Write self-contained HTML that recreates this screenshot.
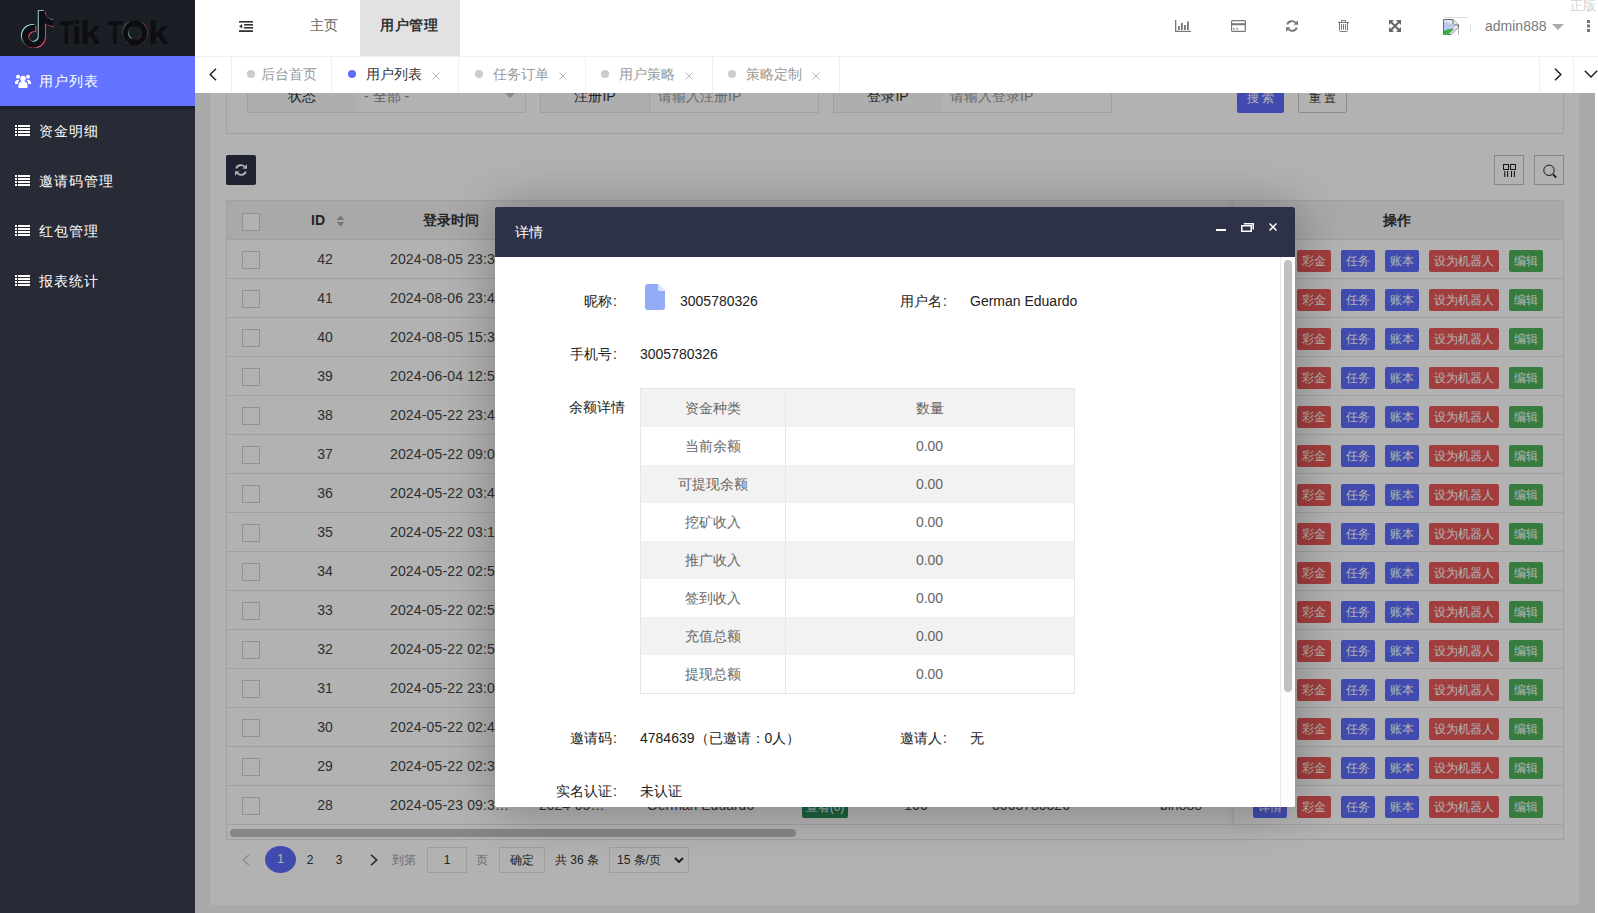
<!DOCTYPE html>
<html><head><meta charset="utf-8">
<style>
*{box-sizing:border-box;margin:0;padding:0}
html,body{width:1598px;height:913px;overflow:hidden;background:#fff;font-family:"Liberation Sans",sans-serif;font-size:14px;color:#333}
.a{position:absolute}
#side{left:0;top:0;width:195px;height:913px;background:#282a36}
#logo{left:0;top:0;width:195px;height:56px;background:#1c1e26}
.mi{position:absolute;left:0;width:195px;height:50px;color:#fff;font-size:14px;line-height:50px;letter-spacing:1px}
.mi span{position:absolute;left:39px;top:0}
.mi svg{position:absolute;left:15px}
#hdr{left:195px;top:0;width:1403px;height:56px;background:#fff}
#tabs{left:195px;top:56px;width:1403px;height:37px;background:#fff;border-top:1px solid #f0f0f0}
.tb{position:absolute;top:0;height:36px;border-right:1px solid #f0f0f0;color:#999;line-height:34px;font-size:14px}
.tb i{position:absolute;width:8px;height:8px;border-radius:50%;background:#ccc;top:13px}
.tb b{position:absolute;font-weight:normal}
.tb em{position:absolute;font-style:normal;top:0}
#cont{left:195px;top:93px;width:1400px;height:820px;background:#f2f2f2;overflow:hidden}
#shade{left:195px;top:93px;width:1400px;height:820px;background:rgba(0,0,0,.3)}
#modal{left:495px;top:207px;width:800px;height:600px;background:#fff;box-shadow:1px 1px 50px rgba(0,0,0,.3);border-radius:2px;overflow:hidden}
#mtitle{left:0;top:0;width:800px;height:50px;background:#2e3248;color:#fff;font-size:14px;line-height:50px;padding-left:20px}
.hi{position:absolute;top:20px}
.lg{top:12px;font-size:34px;font-weight:bold;color:#0d0e12;line-height:40px;transform-origin:0 0}
.ml{position:absolute;left:0;width:122px;text-align:right;line-height:20px;color:#222;font-size:14px}
.mv{position:absolute;line-height:20px;color:#222;font-size:14px;white-space:nowrap}
.mr{position:absolute;left:0;width:435px;height:38px}
.mr span{position:absolute;top:0;text-align:center;line-height:38px;color:#666;font-size:14px}

.lab{position:absolute;top:-18px;width:110px;height:38px;border:1px solid #e6e6e6;background:#fafafa;text-align:center;line-height:40px;color:#333;font-size:14px}
.inp{position:absolute;top:-18px;height:38px;border:1px solid #e6e6e6;border-left:none;background:#fff;line-height:40px;color:#999;padding-left:8px;font-size:14px}
#tbl{left:31px;top:107px;width:1338px;height:640px;border:1px solid #e6e6e6;background:#fff;overflow:hidden}
.th{position:absolute;left:0;top:0;width:1338px;height:39px;background:#f2f2f2;border-bottom:1px solid #e6e6e6;line-height:38px}
.tr{position:absolute;left:0;width:1338px;height:39px;border-bottom:1px solid #e6e6e6;line-height:38px}
.fr{position:absolute;left:0;width:332px;height:39px;border-bottom:1px solid #e6e6e6;background:#fff}
.cb{position:absolute;left:15px;width:18px;height:18px;border:1px solid #d2d2d2;background:#fff}
.c{position:absolute;top:0;text-align:center;color:#444;font-size:14px;white-space:nowrap}
.tag{position:absolute;left:575px;top:10px;width:46px;height:22px;background:#2a8a5a;color:#fff;font-size:12px;line-height:22px;text-align:center;border-radius:2px}
.bt{position:absolute;top:10px;height:22px;line-height:22px;padding:0 5px;font-size:12px;color:#fff;font-weight:normal;border-radius:2px;white-space:nowrap}
.bl{background:#5e6cfb}.rd{background:#e85858}.gr{background:#4cb25a}

</style></head>
<body>
<div id="side" class="a">
  <div id="logo" class="a">
    <svg class="a" style="left:18px;top:10px" width="36" height="38" viewBox="-1 -0.6 23.5 24.8">
      <path d="M12.525.02c1.31-.02 2.61-.01 3.91-.02.08 1.53.63 3.09 1.75 4.17 1.12 1.11 2.7 1.62 4.24 1.79v4.03c-1.44-.05-2.89-.35-4.2-.97-.57-.26-1.1-.59-1.62-.93-.01 2.92.01 5.840-.02 8.75-.08 1.4-.54 2.79-1.350 3.94-1.31 1.92-3.58 3.17-5.91 3.21-1.43.08-2.86-.31-4.08-1.03-2.02-1.19-3.44-3.37-3.65-5.71-.02-.5-.03-1-.01-1.49.18-1.9 1.12-3.72 2.58-4.96 1.66-1.44 3.98-2.13 6.15-1.72.02 1.48-.04 2.96-.04 4.44-.99-.32-2.150-.23-3.020.37-.63.41-1.11 1.04-1.36 1.75-.21.51-.15 1.07-.14 1.61.24 1.64 1.82 3.02 3.5 2.87 1.12-.01 2.19-.66 2.77-1.61.19-.33.4-.67.41-1.06.1-1.79.06-3.57.07-5.36.01-4.03-.01-8.05.02-12.07z" fill="#a6e3e6" transform="translate(-0.6,-0.5)"/>
      <path d="M12.525.02c1.31-.02 2.61-.01 3.91-.02.08 1.53.63 3.09 1.75 4.17 1.12 1.11 2.7 1.62 4.24 1.79v4.03c-1.44-.05-2.89-.35-4.2-.97-.57-.26-1.1-.59-1.62-.93-.01 2.92.01 5.840-.02 8.75-.08 1.4-.54 2.79-1.350 3.94-1.31 1.92-3.58 3.17-5.91 3.21-1.43.08-2.86-.31-4.08-1.03-2.02-1.19-3.44-3.37-3.65-5.71-.02-.5-.03-1-.01-1.49.18-1.9 1.12-3.72 2.58-4.96 1.66-1.44 3.98-2.13 6.15-1.72.02 1.48-.04 2.96-.04 4.44-.99-.32-2.150-.23-3.020.37-.63.41-1.11 1.04-1.36 1.75-.21.51-.15 1.07-.14 1.61.24 1.64 1.82 3.02 3.5 2.87 1.12-.01 2.19-.66 2.77-1.61.19-.33.4-.67.41-1.06.1-1.79.06-3.57.07-5.36.01-4.03-.01-8.05.02-12.07z" fill="#e8506a" transform="translate(0.6,0.5)"/>
      <path d="M12.525.02c1.31-.02 2.61-.01 3.91-.02.08 1.53.63 3.09 1.75 4.17 1.12 1.11 2.7 1.62 4.24 1.79v4.03c-1.44-.05-2.89-.35-4.2-.97-.57-.26-1.1-.59-1.62-.93-.01 2.92.01 5.840-.02 8.75-.08 1.4-.54 2.79-1.350 3.94-1.31 1.92-3.58 3.17-5.91 3.21-1.43.08-2.86-.31-4.08-1.03-2.02-1.19-3.44-3.37-3.65-5.71-.02-.5-.03-1-.01-1.49.18-1.9 1.12-3.72 2.58-4.96 1.66-1.44 3.98-2.13 6.15-1.72.02 1.48-.04 2.96-.04 4.44-.99-.32-2.150-.23-3.020.37-.63.41-1.11 1.04-1.36 1.75-.21.51-.15 1.07-.14 1.61.24 1.64 1.82 3.02 3.5 2.87 1.12-.01 2.19-.66 2.77-1.61.19-.33.4-.67.41-1.06.1-1.79.06-3.57.07-5.36.01-4.03-.01-8.05.02-12.07z" fill="#0e0f14"/>
    </svg>
    <div class="a lg" style="left:59px;transform:scaleX(0.7)">T</div><div class="a lg" style="left:72px">i</div><div class="a lg" style="left:80px;transform:scaleX(1.08)">k</div><div class="a lg" style="left:107px;transform:scaleX(0.76)">T</div>
    <svg class="a" style="left:121px;top:19px" width="28" height="28" viewBox="0 0 28 28"><circle cx="13.6" cy="14" r="9.6" fill="none" stroke="#a6e3e6" stroke-width="6" stroke-dasharray="20 100" transform="rotate(120 14 14)"/><circle cx="14.4" cy="14" r="9.6" fill="none" stroke="#c04058" stroke-width="6" stroke-dasharray="22 100" transform="rotate(-60 14 14)"/><circle cx="14" cy="14" r="9.6" fill="none" stroke="#0d0e12" stroke-width="5.6"/></svg>
    <div class="a lg" style="left:148px;transform:scaleX(1.08)">k</div>
  </div>
  <div class="mi" style="top:56px;background:#6373ff">
    <svg style="top:18px" width="16" height="15" viewBox="0 0 16 15" fill="#fff">
      <circle cx="8" cy="4.5" r="2.8"/><circle cx="3" cy="2.8" r="2"/><circle cx="13" cy="2.8" r="2"/>
      <path d="M3.5 14 v-3 a4.5 4 0 0 1 9 0 v3z"/><path d="M0 10 a3 3 0 0 1 3 -4 h1.5 a4 4 0 0 0 -1.5 3.5 v0.5z"/><path d="M16 10 a3 3 0 0 0 -3 -4 h-1.5 a4 4 0 0 1 1.5 3.5 v0.5z"/>
    </svg><span>用户列表</span></div>
  <div class="a" style="left:0;top:106px;width:195px;height:4px;background:#1f222c"></div>
  <div class="mi" style="top:106px"><svg style="top:19px" width="15" height="11" viewBox="0 0 15 11" fill="#fff"><rect x="0" y="0" width="2" height="2"/><rect x="3" y="0" width="12" height="2"/><rect x="0" y="3" width="2" height="2"/><rect x="3" y="3" width="12" height="2"/><rect x="0" y="6" width="2" height="2"/><rect x="3" y="6" width="12" height="2"/><rect x="0" y="9" width="2" height="2"/><rect x="3" y="9" width="12" height="2"/></svg><span>资金明细</span></div>
  <div class="mi" style="top:156px"><svg style="top:19px" width="15" height="11" viewBox="0 0 15 11" fill="#fff"><rect x="0" y="0" width="2" height="2"/><rect x="3" y="0" width="12" height="2"/><rect x="0" y="3" width="2" height="2"/><rect x="3" y="3" width="12" height="2"/><rect x="0" y="6" width="2" height="2"/><rect x="3" y="6" width="12" height="2"/><rect x="0" y="9" width="2" height="2"/><rect x="3" y="9" width="12" height="2"/></svg><span>邀请码管理</span></div>
  <div class="mi" style="top:206px"><svg style="top:19px" width="15" height="11" viewBox="0 0 15 11" fill="#fff"><rect x="0" y="0" width="2" height="2"/><rect x="3" y="0" width="12" height="2"/><rect x="0" y="3" width="2" height="2"/><rect x="3" y="3" width="12" height="2"/><rect x="0" y="6" width="2" height="2"/><rect x="3" y="6" width="12" height="2"/><rect x="0" y="9" width="2" height="2"/><rect x="3" y="9" width="12" height="2"/></svg><span>红包管理</span></div>
  <div class="mi" style="top:256px"><svg style="top:19px" width="15" height="11" viewBox="0 0 15 11" fill="#fff"><rect x="0" y="0" width="2" height="2"/><rect x="3" y="0" width="12" height="2"/><rect x="0" y="3" width="2" height="2"/><rect x="3" y="3" width="12" height="2"/><rect x="0" y="6" width="2" height="2"/><rect x="3" y="6" width="12" height="2"/><rect x="0" y="9" width="2" height="2"/><rect x="3" y="9" width="12" height="2"/></svg><span>报表统计</span></div>
</div>

<div id="hdr" class="a">
  <svg class="a" style="left:44px;top:21px" width="14" height="11" viewBox="0 0 14 11" fill="#333">
    <rect x="0" y="0" width="14" height="1.6"/><rect x="5" y="3" width="9" height="1.6"/><rect x="5" y="6" width="9" height="1.6"/><rect x="0" y="9.2" width="14" height="1.8"/><path d="M0 5.3 L3.2 3 V7.6z"/>
  </svg>
  <div class="a" style="left:115px;top:0;line-height:51px;color:#666">主页</div>
  <div class="a" style="left:165px;top:0;width:100px;height:56px;background:#e2e2e2;line-height:51px;padding-left:20px;font-weight:bold;color:#333;letter-spacing:0.5px">用户管理</div>
  <!-- right icons -->
  <svg class="hi" style="left:980px" width="16" height="12" viewBox="0 0 16 12" fill="#777"><rect x="0" y="0" width="1.3" height="12"/><rect x="0" y="10.8" width="16" height="1.2"/><rect x="3" y="6" width="1.8" height="4"/><rect x="6" y="3" width="1.8" height="7"/><rect x="9" y="5" width="1.8" height="5"/><rect x="12" y="1.5" width="1.8" height="8.5"/></svg>
  <svg class="hi" style="left:1036px" width="15" height="12" viewBox="0 0 15 12" fill="none" stroke="#777"><rect x="0.6" y="0.6" width="13.8" height="10.8" rx="1" stroke-width="1.2"/><rect x="0.6" y="3.2" width="13.8" height="2" fill="#777" stroke="none"/><rect x="2" y="8.4" width="2" height="1" fill="#777" stroke="none"/><rect x="5" y="8.4" width="2" height="1" fill="#777" stroke="none"/></svg>
  <svg class="hi" style="left:1091px" width="12" height="12" viewBox="0 0 12 12"><g fill="none" stroke="#777" stroke-width="1.9"><path d="M1.2 4.6 A4.9 4.9 0 0 1 9.6 2.8"/><path d="M10.8 7.4 A4.9 4.9 0 0 1 2.4 9.2"/></g><g fill="#777"><path d="M12 0.3 V4.7 H7.6z"/><path d="M0 11.7 V7.3 H4.4z"/></g></svg>
  <svg class="hi" style="left:1143px" width="11" height="12" viewBox="0 0 11 12" fill="none" stroke="#777" stroke-width="1"><path d="M0 2.5 H11"/><path d="M3.5 2.3 V0.5 H7.5 V2.3"/><path d="M1.5 2.5 V10.5 a1 1 0 0 0 1 1 H8.5 a1 1 0 0 0 1 -1 V2.5"/><path d="M3.5 4 V9.8 M5.5 4 V9.8 M7.5 4 V9.8"/></svg>
  <svg class="hi" style="left:1194px" width="12" height="12" viewBox="0 0 12 12"><path d="M2 2 L10 10 M10 2 L2 10" stroke="#666" stroke-width="2"/><g fill="#666"><path d="M0 0 H5 L0 5z"/><path d="M12 0 V5 L7 0z"/><path d="M0 12 V7 L5 12z"/><path d="M12 12 H7 L12 7z"/></g></svg>
  <div class="a" style="left:1249px;top:17px;width:24px;height:1px;background:#dcdcdc"></div>
  <div class="a" style="left:1275px;top:24px;width:1px;height:8px;background:#dcdcdc"></div>
  <svg class="a" style="left:1248px;top:19px" width="16" height="17" viewBox="0 0 16 17"><path d="M0.5 0.5 H10 L15.5 6 V15.5 H0.5z" fill="#e4e6f6" stroke="#666"/><path d="M10 0.5 V6 H15.5" fill="#eee" stroke="#666"/><path d="M1 4 q3 -2 5 0 q2 2 5 1 v4 L7 14 H1z" fill="#b9c8f0"/><path d="M1 16 V12 q5 -3 10 -2 L4.5 16z" fill="#3fae45"/><path d="M7 16.5 L15.5 8.5 V16.5z" fill="#fff"/><path d="M7 16.3 L15.3 8.6" stroke="#888" stroke-width="0.9"/></svg>
  <div class="a" style="left:1290px;top:0;line-height:52px;color:#7a7a7a;font-size:14px">admin888</div>
  <svg class="a" style="left:1357px;top:24px" width="12" height="7" viewBox="0 0 12 7" fill="#aaa"><path d="M0 0 H12 L6 6z"/></svg>
  <svg class="a" style="left:1392px;top:20px" width="3" height="12" viewBox="0 0 3 12" fill="#777"><rect x="0" y="0" width="3" height="3"/><rect x="0" y="4.5" width="3" height="3"/><rect x="0" y="9" width="3" height="3"/></svg>
  <div class="a" style="left:1375px;top:-2px;color:#d4d4d4;font-size:13px;line-height:16px">正版</div>
</div>

<div id="tabs" class="a">
  <div class="tb" style="left:0;width:37px"><svg class="a" style="left:14px;top:11px" width="8" height="13" viewBox="0 0 8 13" fill="none" stroke="#222" stroke-width="1.5"><path d="M7 0.8 L1.2 6.5 L7 12.2"/></svg></div>
  <div class="tb" style="left:37px;width:100px"><i style="left:15px"></i><b style="left:29px">后台首页</b></div>
  <div class="tb" style="left:137px;width:127px"><i style="left:16px;background:#5e6cfb"></i><b style="left:34px;color:#333">用户列表</b><svg class="a" style="left:100px;top:15px" width="8" height="8" viewBox="0 0 8 8" fill="none" stroke="#bbb" stroke-width="1"><path d="M0.5 0.5 L7.5 7.5 M7.5 0.5 L0.5 7.5"/></svg></div>
  <div class="tb" style="left:264px;width:127px"><i style="left:16px"></i><b style="left:34px">任务订单</b><svg class="a" style="left:100px;top:15px" width="8" height="8" viewBox="0 0 8 8" fill="none" stroke="#bbb" stroke-width="1"><path d="M0.5 0.5 L7.5 7.5 M7.5 0.5 L0.5 7.5"/></svg></div>
  <div class="tb" style="left:391px;width:127px"><i style="left:15px"></i><b style="left:33px">用户策略</b><svg class="a" style="left:99px;top:15px" width="8" height="8" viewBox="0 0 8 8" fill="none" stroke="#bbb" stroke-width="1"><path d="M0.5 0.5 L7.5 7.5 M7.5 0.5 L0.5 7.5"/></svg></div>
  <div class="tb" style="left:518px;width:127px"><i style="left:15px"></i><b style="left:33px">策略定制</b><svg class="a" style="left:99px;top:15px" width="8" height="8" viewBox="0 0 8 8" fill="none" stroke="#bbb" stroke-width="1"><path d="M0.5 0.5 L7.5 7.5 M7.5 0.5 L0.5 7.5"/></svg></div>
  <div class="tb" style="left:1344px;width:35px;border-left:1px solid #f0f0f0"><svg class="a" style="left:14px;top:11px" width="8" height="13" viewBox="0 0 8 13" fill="none" stroke="#222" stroke-width="1.5"><path d="M1 0.8 L6.8 6.5 L1 12.2"/></svg></div>
  <div class="tb" style="left:1379px;width:24px;border-right:none"><svg class="a" style="left:10px;top:13px" width="14" height="8" viewBox="0 0 14 8" fill="none" stroke="#222" stroke-width="1.5"><path d="M0.8 0.8 L7 7 L13.2 0.8"/></svg></div>
</div>

<div id="cont" class="a">
  <div class="a" style="left:15px;top:-40px;width:1369px;height:852px;background:#fff;border-radius:2px"></div>
  <div class="a" style="left:31px;top:-60px;width:1338px;height:101px;border:1px solid #e6e6e6"></div>
  <div class="lab" style="left:52px">状态</div><div class="inp" style="left:161px;width:170px;color:#888">- 全部 -<svg class="a" style="right:9px;top:16px" width="12" height="6" viewBox="0 0 12 6" fill="#c2c2c2"><path d="M0 0H12L6 6z"/></svg></div>
  <div class="lab" style="left:345px">注册IP</div><div class="inp" style="left:455px;width:169px">请输入注册IP</div>
  <div class="lab" style="left:638px">登录IP</div><div class="inp" style="left:747px;width:170px">请输入登录IP</div>
  <div class="a" style="left:1042px;top:-10px;width:47px;height:30px;background:#5e6cfb;border-radius:2px;color:#fff;font-size:12px;line-height:30px;text-align:center;letter-spacing:3px;padding-left:3px">搜索</div>
  <div class="a" style="left:1103px;top:-10px;width:49px;height:30px;background:#fff;border:1px solid #c9c9c9;border-radius:2px;color:#333;font-size:12px;line-height:28px;text-align:center;letter-spacing:3px;padding-left:3px">重置</div>
  <div class="a" style="left:31px;top:62px;width:30px;height:30px;background:#2e3248;border-radius:2px">
    <svg class="a" style="left:9px;top:9px" width="12" height="12" viewBox="0 0 12 12"><g fill="none" stroke="#fff" stroke-width="1.9"><path d="M1.2 4.6 A4.9 4.9 0 0 1 9.6 2.8"/><path d="M10.8 7.4 A4.9 4.9 0 0 1 2.4 9.2"/></g><g fill="#fff"><path d="M12 0.3 V4.7 H7.6z"/><path d="M0 11.7 V7.3 H4.4z"/></g></svg>
  </div>
  <div class="a" style="left:1299px;top:62px;width:30px;height:30px;border:1px solid #c2c2c2">
    <svg class="a" style="left:8px;top:8px" width="14" height="14" viewBox="0 0 14 14" fill="none" stroke="#222" stroke-width="1"><rect x="0.5" y="0.5" width="5" height="5"/><rect x="7.5" y="0.5" width="5" height="5"/><path d="M1.8 7 V13 M4.6 7 V13 M8.5 7 V13 M11.4 7 V13" stroke-width="1.1"/></svg>
  </div>
  <div class="a" style="left:1339px;top:62px;width:30px;height:30px;border:1px solid #c2c2c2">
    <svg class="a" style="left:7px;top:7px" width="16" height="16" viewBox="0 0 16 16" fill="none" stroke="#222"><circle cx="7" cy="7.3" r="5.2" stroke-width="1"/><path d="M11 11.3 L14.2 14.5" stroke-width="1.8"/></svg>
  </div>
  <div id="tbl" class="a">
    <div class="th"><i class="cb" style="top:12px"></i><span class="c" style="left:84px;font-weight:bold;color:#333">ID</span><svg style="position:absolute;left:109px;top:14px" width="9" height="12" viewBox="0 0 9 12" fill="#aaa"><path d="M0.5 5 L4.5 0.5 L8.5 5z M0.5 7 L4.5 11.5 L8.5 7z"/></svg><span class="c" style="left:146px;width:156px;font-weight:bold;color:#333">登录时间</span><span class="c" style="left:1007px;width:326px;font-weight:bold;color:#333">操作</span></div>
<div class="tr" style="top:39px"><i class="cb" style="top:11px"></i><span class="c" style="left:50px;width:96px">42</span><span class="c" style="left:163px;text-align:left;letter-spacing:0.15px">2024-08-05 23:3…</span><span class="c" style="left:312px;text-align:left">2024-05…</span><span class="c" style="left:390px;width:167px">German Eduardo</span><span class="tag">查看(0)</span><span class="c" style="left:629px;width:120px">100</span><span class="c" style="left:744px;width:120px">3005780326</span><span class="c" style="left:894px;width:120px">bin888</span></div>
<div class="tr" style="top:78px"><i class="cb" style="top:11px"></i><span class="c" style="left:50px;width:96px">41</span><span class="c" style="left:163px;text-align:left;letter-spacing:0.15px">2024-08-06 23:4…</span><span class="c" style="left:312px;text-align:left">2024-05…</span><span class="c" style="left:390px;width:167px">German Eduardo</span><span class="tag">查看(0)</span><span class="c" style="left:629px;width:120px">100</span><span class="c" style="left:744px;width:120px">3005780326</span><span class="c" style="left:894px;width:120px">bin888</span></div>
<div class="tr" style="top:117px"><i class="cb" style="top:11px"></i><span class="c" style="left:50px;width:96px">40</span><span class="c" style="left:163px;text-align:left;letter-spacing:0.15px">2024-08-05 15:3…</span><span class="c" style="left:312px;text-align:left">2024-05…</span><span class="c" style="left:390px;width:167px">German Eduardo</span><span class="tag">查看(0)</span><span class="c" style="left:629px;width:120px">100</span><span class="c" style="left:744px;width:120px">3005780326</span><span class="c" style="left:894px;width:120px">bin888</span></div>
<div class="tr" style="top:156px"><i class="cb" style="top:11px"></i><span class="c" style="left:50px;width:96px">39</span><span class="c" style="left:163px;text-align:left;letter-spacing:0.15px">2024-06-04 12:5…</span><span class="c" style="left:312px;text-align:left">2024-05…</span><span class="c" style="left:390px;width:167px">German Eduardo</span><span class="tag">查看(0)</span><span class="c" style="left:629px;width:120px">100</span><span class="c" style="left:744px;width:120px">3005780326</span><span class="c" style="left:894px;width:120px">bin888</span></div>
<div class="tr" style="top:195px"><i class="cb" style="top:11px"></i><span class="c" style="left:50px;width:96px">38</span><span class="c" style="left:163px;text-align:left;letter-spacing:0.15px">2024-05-22 23:4…</span><span class="c" style="left:312px;text-align:left">2024-05…</span><span class="c" style="left:390px;width:167px">German Eduardo</span><span class="tag">查看(0)</span><span class="c" style="left:629px;width:120px">100</span><span class="c" style="left:744px;width:120px">3005780326</span><span class="c" style="left:894px;width:120px">bin888</span></div>
<div class="tr" style="top:234px"><i class="cb" style="top:11px"></i><span class="c" style="left:50px;width:96px">37</span><span class="c" style="left:163px;text-align:left;letter-spacing:0.15px">2024-05-22 09:0…</span><span class="c" style="left:312px;text-align:left">2024-05…</span><span class="c" style="left:390px;width:167px">German Eduardo</span><span class="tag">查看(0)</span><span class="c" style="left:629px;width:120px">100</span><span class="c" style="left:744px;width:120px">3005780326</span><span class="c" style="left:894px;width:120px">bin888</span></div>
<div class="tr" style="top:273px"><i class="cb" style="top:11px"></i><span class="c" style="left:50px;width:96px">36</span><span class="c" style="left:163px;text-align:left;letter-spacing:0.15px">2024-05-22 03:4…</span><span class="c" style="left:312px;text-align:left">2024-05…</span><span class="c" style="left:390px;width:167px">German Eduardo</span><span class="tag">查看(0)</span><span class="c" style="left:629px;width:120px">100</span><span class="c" style="left:744px;width:120px">3005780326</span><span class="c" style="left:894px;width:120px">bin888</span></div>
<div class="tr" style="top:312px"><i class="cb" style="top:11px"></i><span class="c" style="left:50px;width:96px">35</span><span class="c" style="left:163px;text-align:left;letter-spacing:0.15px">2024-05-22 03:1…</span><span class="c" style="left:312px;text-align:left">2024-05…</span><span class="c" style="left:390px;width:167px">German Eduardo</span><span class="tag">查看(0)</span><span class="c" style="left:629px;width:120px">100</span><span class="c" style="left:744px;width:120px">3005780326</span><span class="c" style="left:894px;width:120px">bin888</span></div>
<div class="tr" style="top:351px"><i class="cb" style="top:11px"></i><span class="c" style="left:50px;width:96px">34</span><span class="c" style="left:163px;text-align:left;letter-spacing:0.15px">2024-05-22 02:5…</span><span class="c" style="left:312px;text-align:left">2024-05…</span><span class="c" style="left:390px;width:167px">German Eduardo</span><span class="tag">查看(0)</span><span class="c" style="left:629px;width:120px">100</span><span class="c" style="left:744px;width:120px">3005780326</span><span class="c" style="left:894px;width:120px">bin888</span></div>
<div class="tr" style="top:390px"><i class="cb" style="top:11px"></i><span class="c" style="left:50px;width:96px">33</span><span class="c" style="left:163px;text-align:left;letter-spacing:0.15px">2024-05-22 02:5…</span><span class="c" style="left:312px;text-align:left">2024-05…</span><span class="c" style="left:390px;width:167px">German Eduardo</span><span class="tag">查看(0)</span><span class="c" style="left:629px;width:120px">100</span><span class="c" style="left:744px;width:120px">3005780326</span><span class="c" style="left:894px;width:120px">bin888</span></div>
<div class="tr" style="top:429px"><i class="cb" style="top:11px"></i><span class="c" style="left:50px;width:96px">32</span><span class="c" style="left:163px;text-align:left;letter-spacing:0.15px">2024-05-22 02:5…</span><span class="c" style="left:312px;text-align:left">2024-05…</span><span class="c" style="left:390px;width:167px">German Eduardo</span><span class="tag">查看(0)</span><span class="c" style="left:629px;width:120px">100</span><span class="c" style="left:744px;width:120px">3005780326</span><span class="c" style="left:894px;width:120px">bin888</span></div>
<div class="tr" style="top:468px"><i class="cb" style="top:11px"></i><span class="c" style="left:50px;width:96px">31</span><span class="c" style="left:163px;text-align:left;letter-spacing:0.15px">2024-05-22 23:0…</span><span class="c" style="left:312px;text-align:left">2024-05…</span><span class="c" style="left:390px;width:167px">German Eduardo</span><span class="tag">查看(0)</span><span class="c" style="left:629px;width:120px">100</span><span class="c" style="left:744px;width:120px">3005780326</span><span class="c" style="left:894px;width:120px">bin888</span></div>
<div class="tr" style="top:507px"><i class="cb" style="top:11px"></i><span class="c" style="left:50px;width:96px">30</span><span class="c" style="left:163px;text-align:left;letter-spacing:0.15px">2024-05-22 02:4…</span><span class="c" style="left:312px;text-align:left">2024-05…</span><span class="c" style="left:390px;width:167px">German Eduardo</span><span class="tag">查看(0)</span><span class="c" style="left:629px;width:120px">100</span><span class="c" style="left:744px;width:120px">3005780326</span><span class="c" style="left:894px;width:120px">bin888</span></div>
<div class="tr" style="top:546px"><i class="cb" style="top:11px"></i><span class="c" style="left:50px;width:96px">29</span><span class="c" style="left:163px;text-align:left;letter-spacing:0.15px">2024-05-22 02:3…</span><span class="c" style="left:312px;text-align:left">2024-05…</span><span class="c" style="left:390px;width:167px">German Eduardo</span><span class="tag">查看(0)</span><span class="c" style="left:629px;width:120px">100</span><span class="c" style="left:744px;width:120px">3005780326</span><span class="c" style="left:894px;width:120px">bin888</span></div>
<div class="tr" style="top:585px"><i class="cb" style="top:11px"></i><span class="c" style="left:50px;width:96px">28</span><span class="c" style="left:163px;text-align:left;letter-spacing:0.15px">2024-05-23 09:3…</span><span class="c" style="left:312px;text-align:left">2024-05…</span><span class="c" style="left:390px;width:167px">German Eduardo</span><span class="tag">查看(0)</span><span class="c" style="left:629px;width:120px">100</span><span class="c" style="left:744px;width:120px">3005780326</span><span class="c" style="left:894px;width:120px">bin888</span></div>
    <div class="a" style="left:1006px;top:0;width:332px;height:625px;border-left:1px solid #e6e6e6;box-shadow:-1px 0 8px rgba(0,0,0,.08)">
<div class="fr" style="top:39px"><b class="bt bl" style="left:19px">详情</b><b class="bt rd" style="left:63px">彩金</b><b class="bt bl" style="left:107px">任务</b><b class="bt bl" style="left:151px">账本</b><b class="bt rd" style="left:195px">设为机器人</b><b class="bt gr" style="left:275px">编辑</b></div>
<div class="fr" style="top:78px"><b class="bt bl" style="left:19px">详情</b><b class="bt rd" style="left:63px">彩金</b><b class="bt bl" style="left:107px">任务</b><b class="bt bl" style="left:151px">账本</b><b class="bt rd" style="left:195px">设为机器人</b><b class="bt gr" style="left:275px">编辑</b></div>
<div class="fr" style="top:117px"><b class="bt bl" style="left:19px">详情</b><b class="bt rd" style="left:63px">彩金</b><b class="bt bl" style="left:107px">任务</b><b class="bt bl" style="left:151px">账本</b><b class="bt rd" style="left:195px">设为机器人</b><b class="bt gr" style="left:275px">编辑</b></div>
<div class="fr" style="top:156px"><b class="bt bl" style="left:19px">详情</b><b class="bt rd" style="left:63px">彩金</b><b class="bt bl" style="left:107px">任务</b><b class="bt bl" style="left:151px">账本</b><b class="bt rd" style="left:195px">设为机器人</b><b class="bt gr" style="left:275px">编辑</b></div>
<div class="fr" style="top:195px"><b class="bt bl" style="left:19px">详情</b><b class="bt rd" style="left:63px">彩金</b><b class="bt bl" style="left:107px">任务</b><b class="bt bl" style="left:151px">账本</b><b class="bt rd" style="left:195px">设为机器人</b><b class="bt gr" style="left:275px">编辑</b></div>
<div class="fr" style="top:234px"><b class="bt bl" style="left:19px">详情</b><b class="bt rd" style="left:63px">彩金</b><b class="bt bl" style="left:107px">任务</b><b class="bt bl" style="left:151px">账本</b><b class="bt rd" style="left:195px">设为机器人</b><b class="bt gr" style="left:275px">编辑</b></div>
<div class="fr" style="top:273px"><b class="bt bl" style="left:19px">详情</b><b class="bt rd" style="left:63px">彩金</b><b class="bt bl" style="left:107px">任务</b><b class="bt bl" style="left:151px">账本</b><b class="bt rd" style="left:195px">设为机器人</b><b class="bt gr" style="left:275px">编辑</b></div>
<div class="fr" style="top:312px"><b class="bt bl" style="left:19px">详情</b><b class="bt rd" style="left:63px">彩金</b><b class="bt bl" style="left:107px">任务</b><b class="bt bl" style="left:151px">账本</b><b class="bt rd" style="left:195px">设为机器人</b><b class="bt gr" style="left:275px">编辑</b></div>
<div class="fr" style="top:351px"><b class="bt bl" style="left:19px">详情</b><b class="bt rd" style="left:63px">彩金</b><b class="bt bl" style="left:107px">任务</b><b class="bt bl" style="left:151px">账本</b><b class="bt rd" style="left:195px">设为机器人</b><b class="bt gr" style="left:275px">编辑</b></div>
<div class="fr" style="top:390px"><b class="bt bl" style="left:19px">详情</b><b class="bt rd" style="left:63px">彩金</b><b class="bt bl" style="left:107px">任务</b><b class="bt bl" style="left:151px">账本</b><b class="bt rd" style="left:195px">设为机器人</b><b class="bt gr" style="left:275px">编辑</b></div>
<div class="fr" style="top:429px"><b class="bt bl" style="left:19px">详情</b><b class="bt rd" style="left:63px">彩金</b><b class="bt bl" style="left:107px">任务</b><b class="bt bl" style="left:151px">账本</b><b class="bt rd" style="left:195px">设为机器人</b><b class="bt gr" style="left:275px">编辑</b></div>
<div class="fr" style="top:468px"><b class="bt bl" style="left:19px">详情</b><b class="bt rd" style="left:63px">彩金</b><b class="bt bl" style="left:107px">任务</b><b class="bt bl" style="left:151px">账本</b><b class="bt rd" style="left:195px">设为机器人</b><b class="bt gr" style="left:275px">编辑</b></div>
<div class="fr" style="top:507px"><b class="bt bl" style="left:19px">详情</b><b class="bt rd" style="left:63px">彩金</b><b class="bt bl" style="left:107px">任务</b><b class="bt bl" style="left:151px">账本</b><b class="bt rd" style="left:195px">设为机器人</b><b class="bt gr" style="left:275px">编辑</b></div>
<div class="fr" style="top:546px"><b class="bt bl" style="left:19px">详情</b><b class="bt rd" style="left:63px">彩金</b><b class="bt bl" style="left:107px">任务</b><b class="bt bl" style="left:151px">账本</b><b class="bt rd" style="left:195px">设为机器人</b><b class="bt gr" style="left:275px">编辑</b></div>
<div class="fr" style="top:585px"><b class="bt bl" style="left:19px">详情</b><b class="bt rd" style="left:63px">彩金</b><b class="bt bl" style="left:107px">任务</b><b class="bt bl" style="left:151px">账本</b><b class="bt rd" style="left:195px">设为机器人</b><b class="bt gr" style="left:275px">编辑</b></div>
    </div>
    <div class="a" style="left:3px;top:628px;width:566px;height:8px;border-radius:4px;background:#c1c1c1"></div>
  </div>
  <!-- pagination -->
  <div id="pg" class="a" style="left:0;top:754px;width:800px;height:26px">
    <svg class="a" style="left:47px;top:7px" width="8" height="12" viewBox="0 0 8 12" fill="none" stroke="#ccc" stroke-width="1.5"><path d="M7 0.7 L1.3 6 L7 11.3"/></svg>
    <div class="a" style="left:70px;top:-1px;width:31px;height:27px;border-radius:50%;background:#5e6cfb;color:#fff;text-align:center;line-height:27px;font-size:12px">1</div>
    <div class="a" style="left:108px;top:0;width:14px;text-align:center;line-height:26px;font-size:12px;color:#333">2</div>
    <div class="a" style="left:137px;top:0;width:14px;text-align:center;line-height:26px;font-size:12px;color:#333">3</div>
    <svg class="a" style="left:175px;top:7px" width="8" height="12" viewBox="0 0 8 12" fill="none" stroke="#333" stroke-width="1.5"><path d="M1 0.7 L6.7 6 L1 11.3"/></svg>
    <div class="a" style="left:197px;top:0;line-height:26px;font-size:12px;color:#999">到第</div>
    <div class="a" style="left:232px;top:0;width:40px;height:26px;border:1px solid #e2e2e2;text-align:center;line-height:24px;font-size:12px;color:#333">1</div>
    <div class="a" style="left:281px;top:0;line-height:26px;font-size:12px;color:#999">页</div>
    <div class="a" style="left:304px;top:0;width:46px;height:26px;border:1px solid #e2e2e2;text-align:center;line-height:24px;font-size:12px;color:#333;background:#fff">确定</div>
    <div class="a" style="left:360px;top:0;line-height:26px;font-size:12px;color:#333">共 36 条</div>
    <div class="a" style="left:414px;top:0;width:80px;height:26px;border:1px solid #e2e2e2;line-height:24px;font-size:12px;color:#333;padding-left:7px">15 条/页<svg class="a" style="left:64px;top:9px" width="10" height="7" viewBox="0 0 10 7" fill="none" stroke="#222" stroke-width="1.8"><path d="M1 1 L5 5 L9 1"/></svg></div>
  </div>
</div>
<div id="shade" class="a"></div>
<div class="a" style="left:1595px;top:93px;width:3px;height:820px;background:#fff"></div>
<div id="modal" class="a">
  <div id="mtitle" class="a">详情</div>
  <div class="a" style="left:721px;top:22px;width:10px;height:2px;background:#fff"></div>
  <svg class="a" style="left:746px;top:16px" width="13" height="9" viewBox="0 0 13 9" fill="none" stroke="#fff" stroke-width="1.5"><rect x="0.75" y="2.75" width="9.5" height="5.5"/><path d="M2.8 0.75 H12.25 V6.5"/></svg>
  <svg class="a" style="left:774px;top:16px" width="8" height="8" viewBox="0 0 8 8" fill="none" stroke="#fff" stroke-width="1.5"><path d="M0.5 0.5 L7.5 7.5 M7.5 0.5 L0.5 7.5"/></svg>
  <div class="a" style="left:785px;top:50px;width:15px;height:550px;background:#fdfdfd;border-left:1px solid #e8e8e8"></div>
  <div class="a" style="left:789px;top:53px;width:8px;height:432px;background:#c1c1c1;border-radius:4px"></div>
  <div class="ml" style="top:84px">昵称<span style="padding-left:1px">:</span></div>
  <svg class="a" style="left:150px;top:77px" width="20" height="26" viewBox="0 0 20 26"><path d="M3 0 H13 L20 7 V23 a3 3 0 0 1 -3 3 H3 a3 3 0 0 1 -3 -3 V3 a3 3 0 0 1 3 -3z" fill="#94abf7"/><path d="M13 0 L20 7 H15 a2 2 0 0 1 -2 -2z" fill="#dce5fd"/></svg>
  <div class="mv" style="left:185px;top:84px">3005780326</div>
  <div class="ml" style="top:84px;left:330px">用户名<span style="padding-left:1px">:</span></div>
  <div class="mv" style="left:475px;top:84px">German Eduardo</div>
  <div class="ml" style="top:137px">手机号<span style="padding-left:1px">:</span></div>
  <div class="mv" style="left:145px;top:137px">3005780326</div>
  <div class="a" style="left:74px;top:190px;line-height:20px;color:#222">余额详情</div>
  <div class="a" style="left:145px;top:181px;width:435px;height:306px;border:1px solid #e6e6e6;overflow:hidden">
    <div class="a" style="left:144px;top:0;width:1px;height:305px;background:#e6e6e6;z-index:2"></div>
<div class="mr" style="top:0px;background:#f2f2f2"><span style="left:-1px;width:145px">资金种类</span><span style="left:144px;width:289px">数量</span></div>
<div class="mr" style="top:38px;background:#fff"><span style="left:-1px;width:145px">当前余额</span><span style="left:144px;width:289px">0.00</span></div>
<div class="mr" style="top:76px;background:#f2f2f2"><span style="left:-1px;width:145px">可提现余额</span><span style="left:144px;width:289px">0.00</span></div>
<div class="mr" style="top:114px;background:#fff"><span style="left:-1px;width:145px">挖矿收入</span><span style="left:144px;width:289px">0.00</span></div>
<div class="mr" style="top:152px;background:#f2f2f2"><span style="left:-1px;width:145px">推广收入</span><span style="left:144px;width:289px">0.00</span></div>
<div class="mr" style="top:190px;background:#fff"><span style="left:-1px;width:145px">签到收入</span><span style="left:144px;width:289px">0.00</span></div>
<div class="mr" style="top:228px;background:#f2f2f2"><span style="left:-1px;width:145px">充值总额</span><span style="left:144px;width:289px">0.00</span></div>
<div class="mr" style="top:266px;background:#fff"><span style="left:-1px;width:145px">提现总额</span><span style="left:144px;width:289px">0.00</span></div>
  </div>
  <div class="ml" style="top:521px">邀请码<span style="padding-left:1px">:</span></div>
  <div class="mv" style="left:145px;top:521px">4784639（已邀请：0人）</div>
  <div class="ml" style="top:521px;left:330px">邀请人<span style="padding-left:1px">:</span></div>
  <div class="mv" style="left:475px;top:521px">无</div>
  <div class="ml" style="top:574px">实名认证<span style="padding-left:1px">:</span></div>
  <div class="mv" style="left:145px;top:574px">未认证</div>
</div>
</body></html>
